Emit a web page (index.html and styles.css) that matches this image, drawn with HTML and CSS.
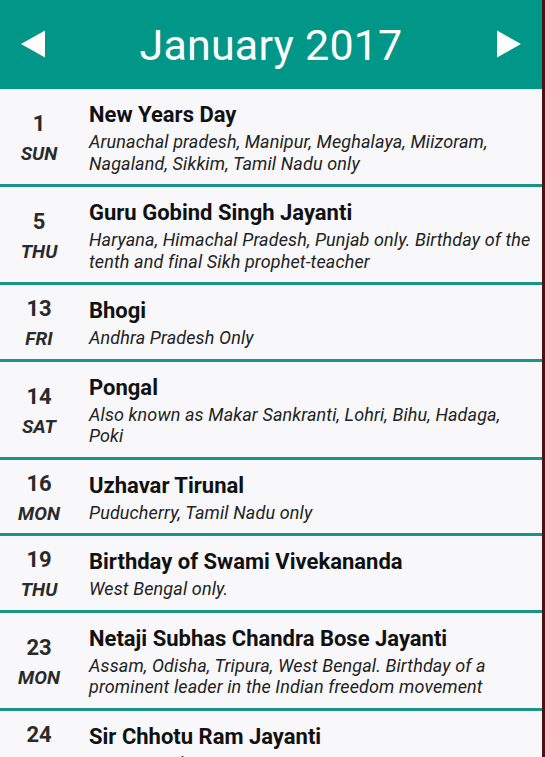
FILE: index.html
```html
<!DOCTYPE html>
<html>
<head>
<meta charset="utf-8">
<link rel="stylesheet" href="styles.css">
</head>
<body>
<div class="app">
  <header class="header">
    <svg class="arrow" width="26" height="28" viewBox="0 0 26 28"><path d="M25 0.5 L25 27.5 L1 14 Z" fill="#fff"/></svg>
    <h1 class="month">January 2017</h1>
    <svg class="arrow" width="26" height="28" viewBox="0 0 26 28"><path d="M1 0.5 L1 27.5 L25 14 Z" fill="#fff"/></svg>
  </header>
  <ul class="list">
    <li class="row">
      <div class="date"><span class="num">1</span><span class="day">SUN</span></div>
      <div class="info"><div class="title">New Years Day</div><div class="desc">Arunachal pradesh, Manipur, Meghalaya, Miizoram, Nagaland, Sikkim, Tamil Nadu only</div></div>
    </li>
    <li class="row">
      <div class="date"><span class="num">5</span><span class="day">THU</span></div>
      <div class="info"><div class="title">Guru Gobind Singh Jayanti</div><div class="desc">Haryana, Himachal Pradesh, Punjab only. Birthday of the tenth and final Sikh prophet-teacher</div></div>
    </li>
    <li class="row">
      <div class="date"><span class="num">13</span><span class="day">FRI</span></div>
      <div class="info"><div class="title">Bhogi</div><div class="desc">Andhra Pradesh Only</div></div>
    </li>
    <li class="row">
      <div class="date"><span class="num">14</span><span class="day">SAT</span></div>
      <div class="info"><div class="title">Pongal</div><div class="desc">Also known as Makar Sankranti, Lohri, Bihu, Hadaga, Poki</div></div>
    </li>
    <li class="row">
      <div class="date"><span class="num">16</span><span class="day">MON</span></div>
      <div class="info"><div class="title">Uzhavar Tirunal</div><div class="desc">Puducherry, Tamil Nadu only</div></div>
    </li>
    <li class="row">
      <div class="date"><span class="num">19</span><span class="day">THU</span></div>
      <div class="info"><div class="title">Birthday of Swami Vivekananda</div><div class="desc">West Bengal only.</div></div>
    </li>
    <li class="row">
      <div class="date"><span class="num">23</span><span class="day">MON</span></div>
      <div class="info"><div class="title">Netaji Subhas Chandra Bose Jayanti</div><div class="desc">Assam, Odisha, Tripura, West Bengal. Birthday of a prominent leader in the Indian freedom movement</div></div>
    </li>
    <li class="row">
      <div class="date"><span class="num">24</span><span class="day">TUE</span></div>
      <div class="info"><div class="title">Sir Chhotu Ram Jayanti</div><div class="desc">Haryana only</div></div>
    </li>
  </ul>
</div>
</body>
</html>
```

FILE: styles.css
```css
html, body {
  margin: 0;
  padding: 0;
  height: 757px;
  overflow: hidden;
  background: #4a1410;
}
.app {
  width: 542px;
  height: 757px;
  background: #f8f8fa;
  font-family: Roboto, "Liberation Sans", sans-serif;
  overflow: hidden;
}
.header {
  height: 89px;
  background: #009688;
  display: flex;
  align-items: center;
  justify-content: space-between;
  padding: 2px 20px 0;
  box-sizing: border-box;
}
.arrow {
  display: block;
  margin-top: -4px;
}
.month {
  margin: 0;
  color: #fff;
  font-weight: 400;
  font-size: 43px;
  line-height: 1;
  letter-spacing: 0.2px;
}
.list {
  list-style: none;
  margin: 0;
  padding: 0;
}
.row {
  display: flex;
  align-items: center;
  padding: 13px 0 10px;
  border-bottom: 3px solid #1a9487;
}
.date {
  width: 78px;
  flex: none;
  display: flex;
  flex-direction: column;
  align-items: center;
  color: #2a2a2a;
  font-weight: 700;
  margin: -8px 0 -9px;
}
.num {
  font-size: 22px;
  line-height: 30px;
}
.day {
  font-size: 19px;
  font-style: italic;
  line-height: 29px;
}
.info {
  margin-left: 11px;
  flex: 1;
  padding-right: 8px;
}
.title {
  font-size: 22px;
  font-weight: 700;
  color: #111;
  line-height: 25px;
  margin-bottom: 4px;
}
.desc {
  font-size: 18px;
  font-style: italic;
  color: #222;
  line-height: 21.5px;
  letter-spacing: 0.12px;
}
```
